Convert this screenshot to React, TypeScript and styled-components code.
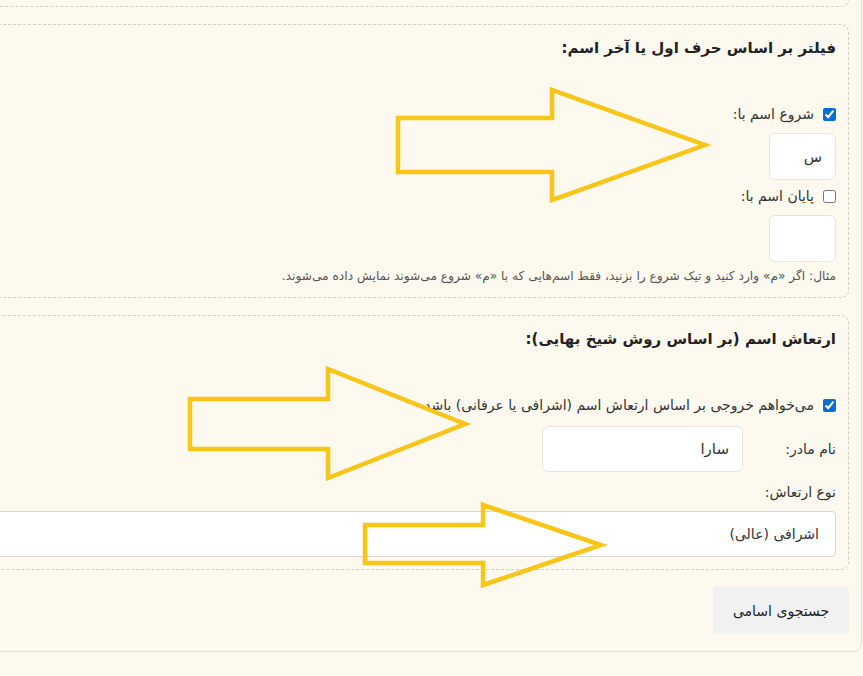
import React, { useState } from 'react';
import styled, { createGlobalStyle } from 'styled-components';

const GlobalStyle = createGlobalStyle`
  html, body {
    margin: 0;
    padding: 0;
    background: #fdf9ee;
    overflow: hidden;
  }
  body {
    font-family: "DejaVu Sans", "Noto Sans", sans-serif;
    color: #222;
  }
  * { box-sizing: border-box; }
`;

const Viewport = styled.div`
  position: relative;
  width: 100%;
  height: 100vh;
  overflow: hidden;
  direction: rtl;
`;

const Card = styled.div`
  width: 1300px;
  margin: -78px 1px 0 0;
  border: 1px solid #e6e1d6;
  border-radius: 8px;
  padding: 12px 12px 17px;
  display: flex;
  flex-direction: column;
`;

const Section = styled.div`
  border: 1px dashed #d3cec3;
  border-radius: 8px;
  padding: 12px;
  display: flex;
  flex-direction: column;
  align-items: flex-start;
  & + & {
    margin-top: 17px;
  }
`;

const Title = styled.h4`
  margin: 0 0 46px;
  font-size: 15px;
  line-height: 22px;
  font-weight: bold;
  color: #222;
`;

const CheckRow = styled.label<{ gapAfter?: number }>`
  display: flex;
  align-items: center;
  gap: 9px;
  font-size: 14px;
  line-height: 18px;
  color: #333;
  margin-bottom: ${p => p.gapAfter ?? 10}px;
  white-space: nowrap;
`;

const Check = styled.input`
  width: 13px;
  height: 13px;
  margin: 0;
  accent-color: #0b6bd6;
`;

const TextInput = styled.input<{ w: number; h?: number }>`
  width: ${p => p.w}px;
  height: ${p => p.h ?? 46}px;
  border: 1px solid #e9e5dc;
  border-radius: 6px;
  background: #fff;
  padding: 0 13px;
  font-family: inherit;
  font-size: 15px;
  color: #333;
  text-align: right;
  outline: none;
`;

const Help = styled.div`
  margin-top: 5px;
  font-size: 12.2px;
  line-height: 18px;
  color: #555;
  white-space: nowrap;
`;

const FieldLabel = styled.div`
  font-size: 14px;
  line-height: 18px;
  color: #333;
  margin-bottom: 10px;
`;

const InlineField = styled.div`
  display: flex;
  align-items: center;
  gap: 13px;
  margin-bottom: 11px;
`;

const InlineLabel = styled.span`
  width: 80px;
  font-size: 14px;
  line-height: 18px;
  color: #333;
`;

const Select = styled.select`
  width: 100%;
  height: 46px;
  appearance: none;
  border: 1px solid #d6d6d6;
  border-radius: 4px;
  background: #fff;
  padding: 0 16px;
  font-family: inherit;
  font-size: 14px;
  color: #333;
  outline: none;
`;

const SearchButton = styled.button`
  align-self: flex-start;
  margin-top: 17px;
  width: 136px;
  height: 47px;
  border: none;
  border-radius: 2px;
  background: #f1f1f1;
  font-family: inherit;
  font-size: 14px;
  color: #222;
  cursor: pointer;
`;

const Overlay = styled.svg`
  position: absolute;
  top: 0;
  left: 0;
  width: 863px;
  height: 676px;
  pointer-events: none;
`;

const arrows = [
  '398,118 552,118 552,90 705,145 552,200 552,172 398,172',
  '190,399 328,399 328,369 465,424 328,478 328,449 190,449',
  '365,525 483,525 483,505 601,545 483,585 483,563 365,563',
];

function App() {
  const [startOn, setStartOn] = useState(true);
  const [endOn, setEndOn] = useState(false);
  const [vibration, setVibration] = useState(true);
  const [startLetter, setStartLetter] = useState('س');
  const [endLetter, setEndLetter] = useState('');
  const [mother, setMother] = useState('سارا');

  return (
    <Viewport>
      <GlobalStyle />
      <Card>
        {/* bottom of the previous block, mostly scrolled out of view */}
        <Section>
          <TextInput w={201} defaultValue="" />
        </Section>

        <Section>
          <Title>فیلتر بر اساس حرف اول یا آخر اسم:</Title>
          <CheckRow>
            <Check type="checkbox" checked={startOn} onChange={e => setStartOn(e.target.checked)} />
            شروع اسم با:
          </CheckRow>
          <TextInput w={67} h={47} value={startLetter} onChange={e => setStartLetter(e.target.value)} />
          <CheckRow style={{ marginTop: 7 }}>
            <Check type="checkbox" checked={endOn} onChange={e => setEndOn(e.target.checked)} />
            پایان اسم با:
          </CheckRow>
          <TextInput w={67} h={47} value={endLetter} onChange={e => setEndLetter(e.target.value)} />
          <Help>مثال: اگر «م» وارد کنید و تیک شروع را بزنید، فقط اسم‌هایی که با «م» شروع می‌شوند نمایش داده می‌شوند.</Help>
        </Section>

        <Section>
          <Title>ارتعاش اسم (بر اساس روش شیخ بهایی):</Title>
          <CheckRow gapAfter={12}>
            <Check type="checkbox" checked={vibration} onChange={e => setVibration(e.target.checked)} />
            می‌خواهم خروجی بر اساس ارتعاش اسم (اشرافی یا عرفانی) باشد
          </CheckRow>
          <InlineField>
            <InlineLabel>نام مادر:</InlineLabel>
            <TextInput w={201} value={mother} onChange={e => setMother(e.target.value)} />
          </InlineField>
          <FieldLabel>نوع ارتعاش:</FieldLabel>
          <Select defaultValue="high">
            <option value="high">اشرافی (عالی)</option>
            <option value="mystic">عرفانی</option>
          </Select>
        </Section>

        <SearchButton>جستجوی اسامی</SearchButton>
      </Card>

      <Overlay viewBox="0 0 863 676">
        {arrows.map((pts, i) => (
          <polygon key={i} points={pts} fill="none" stroke="#f9c518" strokeWidth={4.5} strokeLinejoin="miter" />
        ))}
      </Overlay>
    </Viewport>
  );
}

export default App;
